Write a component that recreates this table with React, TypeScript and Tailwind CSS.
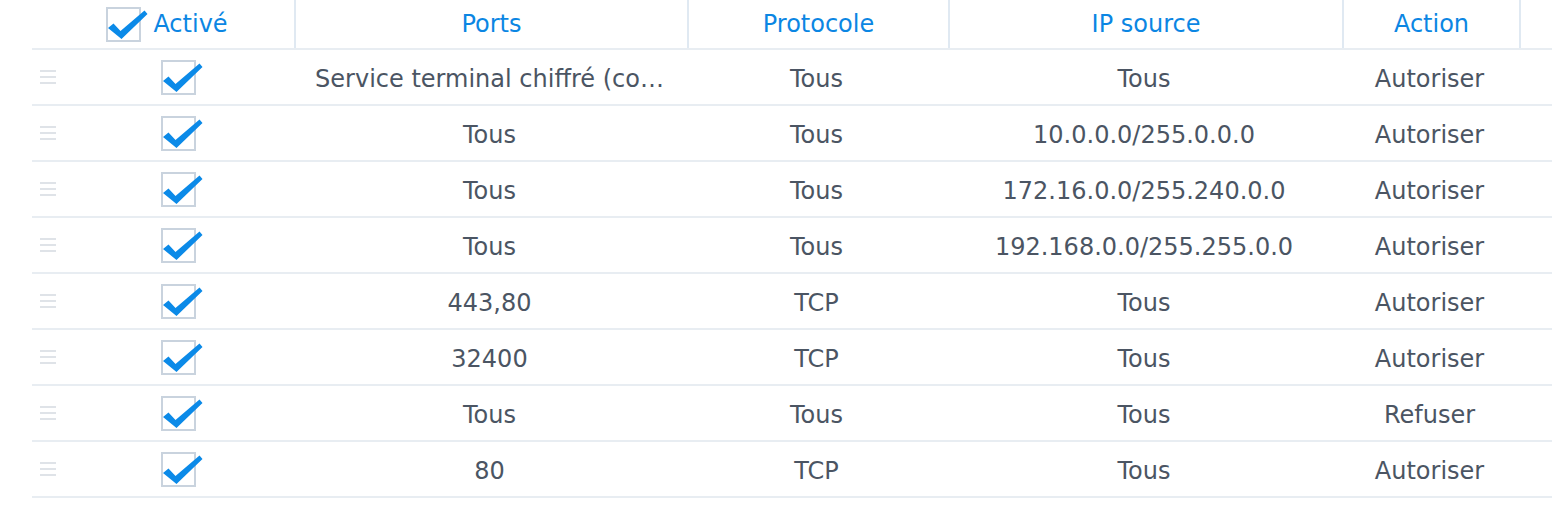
import React from 'react';

type Rule = { ports: string; proto: string; ip: string; action: string };

const RULES: Rule[] = [
  { ports: 'Service terminal chiffré (co…', proto: 'Tous', ip: 'Tous', action: 'Autoriser' },
  { ports: 'Tous', proto: 'Tous', ip: '10.0.0.0/255.0.0.0', action: 'Autoriser' },
  { ports: 'Tous', proto: 'Tous', ip: '172.16.0.0/255.240.0.0', action: 'Autoriser' },
  { ports: 'Tous', proto: 'Tous', ip: '192.168.0.0/255.255.0.0', action: 'Autoriser' },
  { ports: '443,80', proto: 'TCP', ip: 'Tous', action: 'Autoriser' },
  { ports: '32400', proto: 'TCP', ip: 'Tous', action: 'Autoriser' },
  { ports: 'Tous', proto: 'Tous', ip: 'Tous', action: 'Refuser' },
  { ports: '80', proto: 'TCP', ip: 'Tous', action: 'Autoriser' },
];

function Checkbox() {
  return (
    <div className="relative h-[35px] w-[35px] border-2 border-[#c9d3de] bg-white">
      <svg
        width="44"
        height="36"
        viewBox="0 0 44 36"
        className="absolute left-[-2px] top-[-2px] overflow-visible"
      >
        <path d="M2 21 L7.5 16.5 L14.5 24 L38.5 3.5 L41.5 7 L15.5 32 Z" fill="#0b8ae8" />
      </svg>
    </div>
  );
}

function Handle() {
  return (
    <div className="flex w-4 flex-col gap-1">
      <span className="h-0.5 w-4 bg-[#dfe3e8]" />
      <span className="h-0.5 w-4 bg-[#dfe3e8]" />
      <span className="h-0.5 w-4 bg-[#dfe3e8]" />
    </div>
  );
}

export default function App() {
  const head = 'flex h-12 items-center justify-center border-r-2 border-[#e0e9f2]';
  const cell = 'flex items-center justify-center whitespace-nowrap pt-1';

  return (
    <div
      className="h-[506px] w-[1560px] bg-white pl-8 text-[24px] text-[#4b5563]"
      style={{ fontFamily: '"DejaVu Sans", Verdana, sans-serif' }}
    >
      <div className="w-[1520px]">
        {/* Header */}
        <div className="grid grid-cols-[264px_393px_261px_394px_177px_31px] border-b-2 border-[#e8edf2] text-[#0b86e3]">
          <div className={head}>
            <div className="flex items-center gap-3 pl-[8px]">
              <Checkbox />
              <span>Activé</span>
            </div>
          </div>
          <div className={head}>Ports</div>
          <div className={head}>Protocole</div>
          <div className={head}>IP source</div>
          <div className={head}>Action</div>
          <div />
        </div>

        {/* Rows */}
        {RULES.map((r, i) => (
          <div
            key={i}
            className="grid h-14 grid-cols-[32px_229px_393px_261px_394px_177px_34px] border-b-2 border-[#e8edf2]"
          >
            <div className="flex items-center pl-2">
              <Handle />
            </div>
            <div className="flex items-center justify-center">
              <Checkbox />
            </div>
            <div className={cell}>{r.ports}</div>
            <div className={cell}>{r.proto}</div>
            <div className={cell}>{r.ip}</div>
            <div className={cell}>{r.action}</div>
            <div />
          </div>
        ))}
      </div>
    </div>
  );
}
